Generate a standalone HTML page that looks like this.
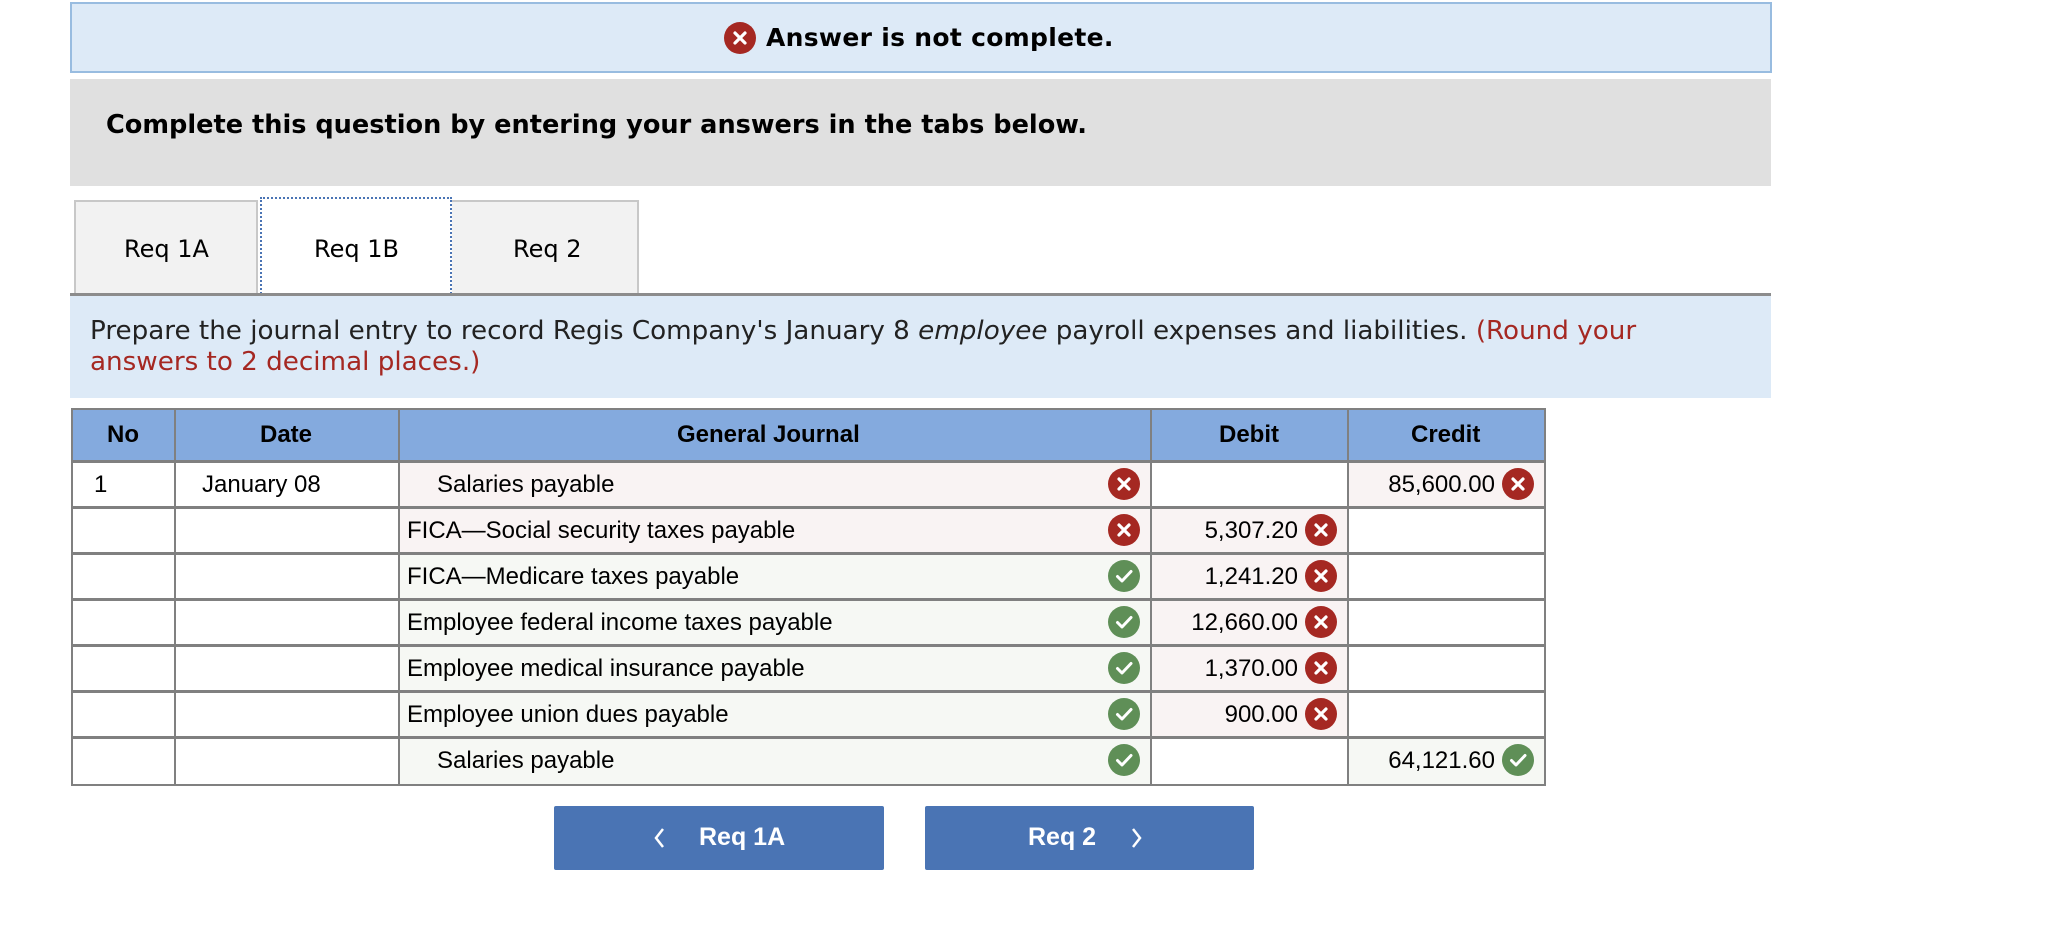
<!DOCTYPE html>
<html><head><meta charset="utf-8"><style>
body{margin:0;width:2050px;height:943px;background:#fff;position:relative;overflow:hidden;font-family:"Liberation Sans",Arial,sans-serif}
.abs{position:absolute}
.v{font-family:"DejaVu Sans",Verdana,sans-serif}
.ic{position:absolute;width:32px;height:32px;border-radius:50%}
.ic svg{width:32px;height:32px;display:block}
.r{background:#a52822}.g{background:#5f8f57}
.cell{position:absolute;font-size:24px;color:#000}
</style></head><body>
<div class="abs" style="left:70px;top:2px;width:1698px;height:67px;background:#ddeaf7;border:2px solid #98bce0"></div>
<div class="ic r" style="left:724px;top:22px"><svg viewBox="0 0 32 32"><path d="M11 11L21 21M21 11L11 21" stroke="#fff" stroke-width="3.2" stroke-linecap="round"/></svg></div>
<div class="abs v" style="left:766px;top:23px;font-size:25px;font-weight:bold;letter-spacing:0.3px">Answer is not complete.</div>
<div class="abs" style="left:70px;top:79px;width:1701px;height:107px;background:#e0e0e0"></div>
<div class="abs v" style="left:106px;top:110px;font-size:25.6px;font-weight:bold">Complete this question by entering your answers in the tabs below.</div>

<div class="abs" style="left:74px;top:200px;width:184px;height:94px;background:#f2f2f2;border:2px solid #c8c8c8;border-bottom:none;box-sizing:border-box"></div>
<div class="abs" style="left:450px;top:200px;width:189px;height:94px;background:#f2f2f2;border:2px solid #c8c8c8;border-bottom:none;box-sizing:border-box"></div>
<div class="abs" style="left:260px;top:197px;width:192px;height:100px;background:#fff;border:2px dotted #4a74b4;box-sizing:border-box"></div>
<div class="abs" style="left:70px;top:293px;width:1701px;height:3px;background:#8c8c8c"></div>
<div class="abs v" style="left:124px;top:235px;font-size:24px">Req 1A</div>
<div class="abs v" style="left:314px;top:235px;font-size:24px">Req 1B</div>
<div class="abs v" style="left:513px;top:235px;font-size:24px">Req 2</div>

<div class="abs" style="left:70px;top:296px;width:1701px;height:102px;background:#ddeaf7"></div>
<div class="abs v" style="left:90px;top:316px;font-size:26.2px;line-height:31px;width:1680px;color:#222;white-space:nowrap">Prepare the journal entry to record Regis Company's January 8 <i>employee</i> payroll expenses and liabilities. <span style="color:#a52822">(Round your<br>answers to 2 decimal places.)</span></div>

<div class="abs" style="left:71px;top:408px;width:1475px;height:378px;border:2px solid #808080;box-sizing:border-box;background:#fff"></div>
<div class="abs" style="left:73px;top:410px;width:1471px;height:51px;background:#84aade"></div>
<div class="abs" style="left:399px;top:461px;width:752px;height:92px;background:#f9f3f3"></div>
<div class="abs" style="left:399px;top:553px;width:752px;height:231px;background:#f6f8f4"></div>
<div class="abs" style="left:1151px;top:507px;width:197px;height:230px;background:#f9f3f3"></div>
<div class="abs" style="left:1348px;top:461px;width:196px;height:46px;background:#f9f3f3"></div>
<div class="abs" style="left:1348px;top:737px;width:196px;height:47px;background:#f6f8f4"></div>
<div class="abs" style="left:174px;top:408px;width:2px;height:378px;background:#808080"></div>
<div class="abs" style="left:398px;top:408px;width:2px;height:378px;background:#808080"></div>
<div class="abs" style="left:1150px;top:408px;width:2px;height:378px;background:#808080"></div>
<div class="abs" style="left:1347px;top:408px;width:2px;height:378px;background:#808080"></div>
<div class="abs" style="left:71px;top:460px;width:1475px;height:3px;background:#808080"></div>
<div class="abs" style="left:71px;top:506px;width:1475px;height:3px;background:#808080"></div>
<div class="abs" style="left:71px;top:552px;width:1475px;height:3px;background:#808080"></div>
<div class="abs" style="left:71px;top:598px;width:1475px;height:3px;background:#808080"></div>
<div class="abs" style="left:71px;top:644px;width:1475px;height:3px;background:#808080"></div>
<div class="abs" style="left:71px;top:690px;width:1475px;height:3px;background:#808080"></div>
<div class="abs" style="left:71px;top:736px;width:1475px;height:3px;background:#808080"></div>

<div class="cell" style="left:107px;top:421px;font-weight:bold">No</div>
<div class="cell" style="left:260px;top:421px;font-weight:bold">Date</div>
<div class="cell" style="left:677px;top:421px;font-weight:bold">General Journal</div>
<div class="cell" style="left:1219px;top:421px;font-weight:bold">Debit</div>
<div class="cell" style="left:1411px;top:421px;font-weight:bold">Credit</div>

<div class="cell" style="left:94px;top:471px">1</div>
<div class="cell" style="left:202px;top:471px">January 08</div>
<div class="cell" style="left:437px;top:471px">Salaries payable</div>
<div class="cell" style="left:407px;top:517px">FICA—Social security taxes payable</div>
<div class="cell" style="left:407px;top:563px">FICA—Medicare taxes payable</div>
<div class="cell" style="left:407px;top:609px">Employee federal income taxes payable</div>
<div class="cell" style="left:407px;top:655px">Employee medical insurance payable</div>
<div class="cell" style="left:407px;top:701px">Employee union dues payable</div>
<div class="cell" style="left:437px;top:747px">Salaries payable</div>

<div class="cell" style="right:752px;top:517px">5,307.20</div>
<div class="cell" style="right:752px;top:563px">1,241.20</div>
<div class="cell" style="right:752px;top:609px">12,660.00</div>
<div class="cell" style="right:752px;top:655px">1,370.00</div>
<div class="cell" style="right:752px;top:701px">900.00</div>
<div class="cell" style="right:555px;top:471px">85,600.00</div>
<div class="cell" style="right:555px;top:747px">64,121.60</div>

<svg width="0" height="0" style="position:absolute"><defs>
<symbol id="x" viewBox="0 0 32 32"><circle cx="16" cy="16" r="16" fill="#a52822"/><path d="M11 11L21 21M21 11L11 21" stroke="#fff" stroke-width="3.2" stroke-linecap="round"/></symbol>
<symbol id="c" viewBox="0 0 32 32"><circle cx="16" cy="16" r="16" fill="#5f8f57"/><path d="M9.5 16.5L14 21L23 11.5" stroke="#fff" stroke-width="3" fill="none" stroke-linecap="round" stroke-linejoin="round"/></symbol>
</defs></svg>
<svg class="abs" style="left:1108px;top:468px" width="32" height="32"><use href="#x"/></svg>
<svg class="abs" style="left:1108px;top:514px" width="32" height="32"><use href="#x"/></svg>
<svg class="abs" style="left:1108px;top:560px" width="32" height="32"><use href="#c"/></svg>
<svg class="abs" style="left:1108px;top:606px" width="32" height="32"><use href="#c"/></svg>
<svg class="abs" style="left:1108px;top:652px" width="32" height="32"><use href="#c"/></svg>
<svg class="abs" style="left:1108px;top:698px" width="32" height="32"><use href="#c"/></svg>
<svg class="abs" style="left:1108px;top:744px" width="32" height="32"><use href="#c"/></svg>
<svg class="abs" style="left:1305px;top:514px" width="32" height="32"><use href="#x"/></svg>
<svg class="abs" style="left:1305px;top:560px" width="32" height="32"><use href="#x"/></svg>
<svg class="abs" style="left:1305px;top:606px" width="32" height="32"><use href="#x"/></svg>
<svg class="abs" style="left:1305px;top:652px" width="32" height="32"><use href="#x"/></svg>
<svg class="abs" style="left:1305px;top:698px" width="32" height="32"><use href="#x"/></svg>
<svg class="abs" style="left:1502px;top:468px" width="32" height="32"><use href="#x"/></svg>
<svg class="abs" style="left:1502px;top:744px" width="32" height="32"><use href="#c"/></svg>

<div class="abs" style="left:554px;top:806px;width:330px;height:64px;background:#4a74b4;border-radius:2px"></div>
<div class="abs" style="left:925px;top:806px;width:329px;height:64px;background:#4a74b4;border-radius:2px"></div>
<svg class="abs" style="left:652px;top:826px" width="14" height="24"><path d="M11 3L4 12L11 21" stroke="#fff" stroke-width="2.5" fill="none"/></svg>
<div class="abs" style="left:699px;top:823px;font-size:25px;font-weight:bold;color:#fff">Req 1A</div>
<div class="abs" style="left:1028px;top:823px;font-size:25px;font-weight:bold;color:#fff">Req 2</div>
<svg class="abs" style="left:1130px;top:826px" width="14" height="24"><path d="M3 3L10 12L3 21" stroke="#fff" stroke-width="2.5" fill="none"/></svg>
</body></html>
